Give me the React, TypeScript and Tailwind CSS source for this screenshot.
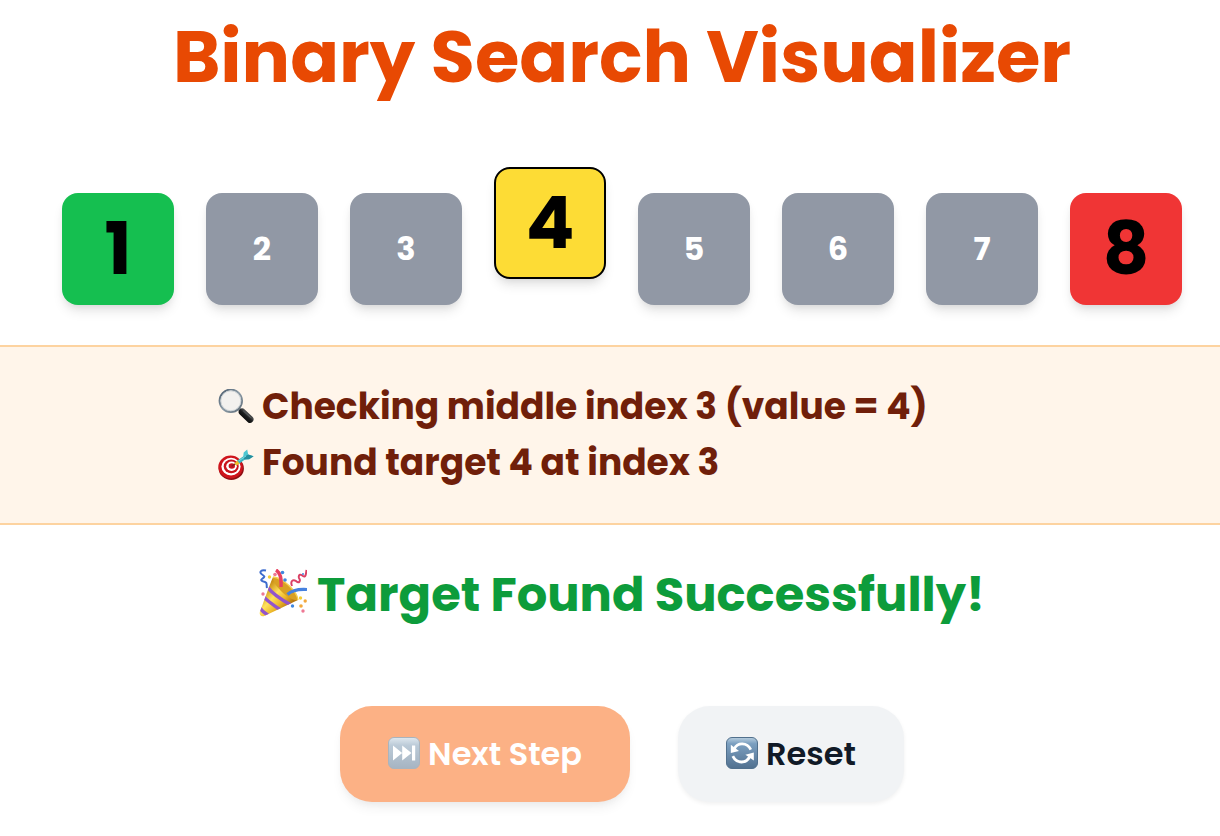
import { useState } from "react";

const values = [1, 2, 3, 4, 5, 6, 7, 8];
const low = 0;
const mid = 3;
const high = 7;

function tileStyle(index: number) {
  if (index === mid) return "-translate-y-[26px] border-2 border-black bg-[#fddc35] text-[72px] text-black";
  if (index === low) return "bg-[#15bf50] text-[72px] text-black";
  if (index === high) return "bg-[#f03535] text-[72px] text-black";
  return "bg-[#9198a5] text-[32px] text-white";
}

function MagnifierIcon() {
  return (
    <svg viewBox="0 0 36 36" className="size-9 shrink-0" aria-hidden="true">
      <defs>
        <linearGradient id="rim" x1="0" y1="0" x2="1" y2="1">
          <stop offset="0" stopColor="#46586a" />
          <stop offset="0.5" stopColor="#8d9ca8" />
          <stop offset="1" stopColor="#5d6b76" />
        </linearGradient>
        <linearGradient id="handle" x1="0" y1="1" x2="1" y2="0">
          <stop offset="0" stopColor="#050505" />
          <stop offset="0.5" stopColor="#1c1d1e" />
          <stop offset="0.75" stopColor="#4c4e50" />
          <stop offset="1" stopColor="#0c0c0c" />
        </linearGradient>
      </defs>
      <path d="M20.5 19.5L24.5 23" stroke="#7a868e" strokeWidth="3" />
      <path d="M24.2 23L32 30.4" stroke="url(#handle)" strokeWidth="7" strokeLinecap="round" />
      <path d="M25.6 22.2L32.4 28.4" stroke="#5c5f61" strokeWidth="1" strokeLinecap="round" />
      <circle cx="12.8" cy="11.8" r="11.2" fill="#f3f1ef" stroke="url(#rim)" strokeWidth="2" />
      <circle cx="12.8" cy="11.8" r="10" fill="none" stroke="#cdd2d5" strokeWidth="1" />
    </svg>
  );
}

function TargetIcon() {
  return (
    <svg viewBox="0 0 36 36" className="size-9 shrink-0" aria-hidden="true">
      <ellipse cx="13.3" cy="23.4" rx="12.6" ry="11.6" fill="#8f0e14" />
      <ellipse cx="12.6" cy="22" rx="12.3" ry="11.4" fill="#cf141c" />
      <ellipse cx="13" cy="21.6" rx="9.6" ry="8.8" fill="#fff" />
      <ellipse cx="13.2" cy="21.4" rx="7.5" ry="6.8" fill="#c9151d" />
      <ellipse cx="13.5" cy="21.2" rx="5.3" ry="4.7" fill="#fff" />
      <ellipse cx="13.8" cy="21" rx="3.2" ry="2.8" fill="#c9151d" />
      <g transform="translate(-0.4 2.8)">
        <path d="M14 18.4L20 14.6" stroke="#7c211c" strokeWidth="1.3" />
        <path d="M16.8 15.6l3.4-3.4 2.4 3.2-3.8 2.2z" fill="#edbd2b" />
        <path d="M19.6 12.8L27.4 7.4l2.2 2.6-7.6 5.6z" fill="#39b6c3" />
        <path d="M25.5 9.6l.6-4.8L29.6 1.6l1 5 5.4 1.8-4.5 3.1-4.8.2z" fill="#4dc6d1" />
        <path d="M26 9.4l4.6-2.8L36 8.4l-4.5 3.1-4.8.2z" fill="#248e9e" />
        <path d="M21 13.2l7.4-5" stroke="#8be2e6" strokeWidth="0.8" />
      </g>
    </svg>
  );
}

function PartyIcon() {
  return (
    <svg viewBox="0 0 48 48" className="mb-1 size-12 shrink-0" aria-hidden="true">
      <defs>
        <linearGradient id="cone" x1="0.1" y1="0.35" x2="0.65" y2="0.85">
          <stop offset="0" stopColor="#c98d14" />
          <stop offset="0.4" stopColor="#ffe25c" />
          <stop offset="0.7" stopColor="#eeb82a" />
          <stop offset="1" stopColor="#b77912" />
        </linearGradient>
        <clipPath id="coneClip">
          <path d="M14 8C10 17 4 35 .8 43c-.8 3 1.5 5 4.5 4L39 31C38 22 24 9 14 8z" />
        </clipPath>
      </defs>
      <path d="M14 8C10 17 4 35 .8 43c-.8 3 1.5 5 4.5 4L39 31C38 22 24 9 14 8z" fill="url(#cone)" />
      <g clipPath="url(#coneClip)" fill="none" stroke="#9254cc" strokeWidth="3.4">
        <path d="M8 17.5c5 7 14 13 24 18.5" />
        <path d="M4 27c4 5 10 9 19 15" />
        <path d="M0 38c2 3 5 6 10 9" />
      </g>
      <path d="M14 8c10 1 24 14 25 23-4 1-11-3-17-9S14 12 14 8z" fill="#d9a024" />
      <path d="M14 8c10 1 24 14 25 23" fill="none" stroke="#f6d050" strokeWidth="1.4" />
      <path d="M17 1c5 3 5.500 9 5 17" fill="none" stroke="#e8405f" strokeWidth="3.4" />
      <path d="M28.500 25.500c4-4 11-5.500 19.500-5" fill="none" stroke="#4681df" strokeWidth="3.2" />
      <path d="M7 1.500C2 .5 0 3 2.500 5c3 2 4 3 1 4.500-3 2 0 3 2.500 3.500 3 1 1 3 2 6" fill="none" stroke="#3d6cce" strokeWidth="2" />
      <path d="M33 17c-2-5 1-7 4-5 3 3 5 0 3-3-1-4 2-4 4-2 3 2 3-3 3.500-6" fill="none" stroke="#da4165" strokeWidth="2" />
      <g fill="#4087df">
        <circle cx="23.500" cy="3.500" r="1.800" />
        <circle cx="26" cy="11" r="1.800" />
        <circle cx="33.500" cy="37" r="1.700" />
        <circle cx="44" cy="5" r="1" />
      </g>
      <g fill="#ee7894">
        <circle cx="16" cy="5.500" r="1.800" />
        <circle cx="4" cy="25" r="1.700" />
        <circle cx="44" cy="42" r="1.700" />
      </g>
      <g fill="#f3a83c">
        <circle cx="42" cy="37" r="1.800" />
        <circle cx="46.200" cy="32" r="1.700" />
      </g>
      <g fill="#f5cf39">
        <circle cx="10.500" cy="8" r="1.700" />
        <circle cx="41.500" cy="29" r="1.700" />
      </g>
    </svg>
  );
}

function NextIcon() {
  return (
    <svg viewBox="0 0 32 32" className="mb-0.5 size-8 shrink-0" aria-hidden="true">
      <defs>
        <linearGradient id="nextFill" x1="0" y1="0" x2="0" y2="1">
          <stop offset="0" stopColor="#dfe8ef" />
          <stop offset="0.25" stopColor="#bccbd8" />
          <stop offset="1" stopColor="#a6b4c2" />
        </linearGradient>
      </defs>
      <rect x="0.5" y="0.5" width="31" height="31" rx="5.500" fill="url(#nextFill)" stroke="#a9b4be" />
      <path d="M5 8.500l9.200 7.500L5 23.500zM14.200 8.500l9.300 7.500-9.300 7.500zM24 8.500h3.200v15H24z" fill="#fff" />
    </svg>
  );
}

function ResetIcon() {
  return (
    <svg viewBox="0 0 32 32" className="mb-0.5 size-8 shrink-0" aria-hidden="true">
      <defs>
        <linearGradient id="resetFill" x1="0" y1="0" x2="0" y2="1">
          <stop offset="0" stopColor="#b8cedf" />
          <stop offset="0.2" stopColor="#7b9fc0" />
          <stop offset="1" stopColor="#51708f" />
        </linearGradient>
      </defs>
      <rect x="0.5" y="0.5" width="31" height="31" rx="5.500" fill="url(#resetFill)" stroke="#51708d" />
      <path d="M24.800 12.600C21 5.200 11.500 5.200 8.300 11.800" fill="none" stroke="#fff" strokeWidth="2.800" />
      <path d="M4.800 7.800v8.200l8.200-2z" fill="#fff" />
      <path d="M6.800 19.200c3.800 7.600 13.300 7.600 16.700.8" fill="none" stroke="#fff" strokeWidth="2.800" />
      <path d="M27.800 23.600v-8l-8.400 2.200z" fill="#fff" />
    </svg>
  );
}

export default function App() {
  const [found, setFound] = useState(true);

  return (
    <main className="min-h-screen overflow-hidden bg-white pb-8 font-['Poppins','Inter',sans-serif] font-bold">
      <h1 className="pt-[21px] pl-6 text-center text-[72px] leading-[72px] whitespace-nowrap text-[#e84903]">
        Binary Search Visualizer
      </h1>

      <ol className="mt-[100px] flex justify-center gap-8 pl-6">
        {values.map((value, index) => (
          <li
            key={value}
            className={`flex size-28 shrink-0 items-center justify-center rounded-2xl leading-none shadow-[0_8px_12px_-2px_rgba(0,0,0,0.1),0_4px_8px_-4px_rgba(0,0,0,0.1)] ${tileStyle(index)}`}
          >
            {value}
          </li>
        ))}
      </ol>

      <section className="mt-10 border-y-2 border-[#fdd3a0] bg-[#fff5ea] py-8 pl-6">
        <ul className="mx-auto max-w-[808px] text-[36px] leading-[56px] whitespace-nowrap text-[#701f0a]">
          <li className="flex items-center gap-2">
            <MagnifierIcon />
            Checking middle index 3 (value = 4)
          </li>
          <li className="flex items-center gap-2">
            <TargetIcon />
            Found target 4 at index 3
          </li>
        </ul>
      </section>

      <p className="mt-10 flex h-[60px] items-center justify-center gap-2.5 pl-6 text-[48px] leading-none whitespace-nowrap text-[#0d9c3b]">
        <PartyIcon />
        Target Found Successfully!
      </p>

      <div className="mt-[81px] flex justify-center gap-12 pl-6 text-[32px] font-semibold">
        <button
          type="button"
          disabled={found}
          className="flex h-24 items-center gap-2 rounded-[32px] bg-[#fcb185] px-12 text-white shadow-[0_8px_12px_-2px_rgba(0,0,0,0.06),0_4px_8px_-4px_rgba(0,0,0,0.06)]"
        >
          <NextIcon />
          Next Step
        </button>
        <button
          type="button"
          onClick={() => setFound(false)}
          className="flex h-24 items-center gap-2 rounded-[32px] bg-[#f1f3f5] px-12 text-[#111a27] shadow-[0_2px_4px_rgba(0,0,0,0.06)]"
        >
          <ResetIcon />
          Reset
        </button>
      </div>
    </main>
  );
}
